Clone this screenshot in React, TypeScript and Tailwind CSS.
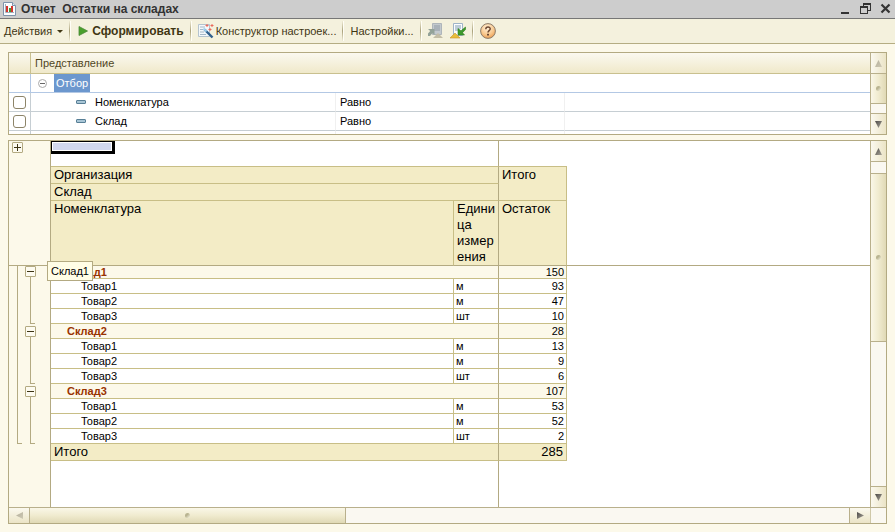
import type { ReactNode } from "react";

const SANS = "font-['Liberation_Sans',Arial,sans-serif]";

type Item = { name: string; unit: string; qty: number };
type Group = { name: string; total: number; items: Item[] };

const groups: Group[] = [
  {
    name: "Склад1",
    total: 150,
    items: [
      { name: "Товар1", unit: "м", qty: 93 },
      { name: "Товар2", unit: "м", qty: 47 },
      { name: "Товар3", unit: "шт", qty: 10 },
    ],
  },
  {
    name: "Склад2",
    total: 28,
    items: [
      { name: "Товар1", unit: "м", qty: 13 },
      { name: "Товар2", unit: "м", qty: 9 },
      { name: "Товар3", unit: "шт", qty: 6 },
    ],
  },
  {
    name: "Склад3",
    total: 107,
    items: [
      { name: "Товар1", unit: "м", qty: 53 },
      { name: "Товар2", unit: "м", qty: 52 },
      { name: "Товар3", unit: "шт", qty: 2 },
    ],
  },
];

function ReportIcon() {
  return (
    <svg width="13" height="14" viewBox="0 0 13 14" aria-hidden="true">
      <path d="M.5.500h9l3 3v10H.5z" fill="#fbfcfe" stroke="#7f93ab" />
      <path d="M9.500.5v3h3" fill="#dfe7f0" stroke="#7f93ab" />
      <path d="M2.500 2v8.500H11" fill="none" stroke="#a3b0bf" />
      <rect x="3" y="4" width="2" height="6" fill="#d3332c" />
      <rect x="6" y="6" width="2" height="4" fill="#3f9a3a" />
      <rect x="8" y="4" width="2" height="6" fill="#d3332c" />
    </svg>
  );
}

function WizardIcon() {
  return (
    <svg width="16" height="16" viewBox="0 0 16 16" aria-hidden="true">
      <path d="M.5 1.500h11v12H.5z" fill="#f4f8fb" stroke="#b4c3ce" />
      <path d="M2 4h5M2 6.500h3M2 9h4M2 11.500h6" stroke="#a5b8c7" />
      <path d="M6.500 6.500l8 8" stroke="#2f5f8c" strokeWidth="2.400" />
      <path d="M5.500 5.500l3 3" stroke="#9fd0ee" strokeWidth="2" />
      <path d="M9 1v3M7.500 2.500h3M14 1v3M12.500 2.500h3M12 5v3M10.500 6.500h3" stroke="#ea6a5c" />
    </svg>
  );
}

function ExportIcon({ load }: { load?: boolean }) {
  return (
    <svg width="16" height="16" viewBox="0 0 16 16" aria-hidden="true">
      {load ? (
        <>
          <path d="M3.500.500h9v12h-9z" fill="#fbfdff" stroke="#9fb4c8" />
          <path d="M5 3h6M5 5h6M5 7h4" stroke="#7f9bb3" />
          <path d="M0 15l5-5 5 5z" fill="#e8bd3b" stroke="#c9962a" strokeWidth=".6" />
          <path d="M8 5.500v6.500h6.500l-2-2.300L15.500 6.500V4L11 7.800z" fill="#3c9a2c" stroke="#2f7d22" strokeWidth=".6" />
        </>
      ) : (
        <>
          <path d="M4.500.500h9v11h-9z" fill="#c3c9ce" stroke="#aeb5ba" />
          <path d="M6 3h6M6 5h6M6 7h6" stroke="#8f9aa4" />
          <path d="M5 15l5-5 5 5z" fill="#c3bda6" />
          <path d="M0 6h6.500v6L4.500 10 2 13H0V10.500L2.200 8z" fill="#93a298" />
        </>
      )}
    </svg>
  );
}

function HelpIcon() {
  return (
    <svg width="16" height="16" viewBox="0 0 16 16" aria-hidden="true">
      <defs>
        <radialGradient id="help" cx=".45" cy=".3" r=".75">
          <stop offset="0" stopColor="#fff0d8" />
          <stop offset=".6" stopColor="#f8c78c" />
          <stop offset="1" stopColor="#e8964a" />
        </radialGradient>
      </defs>
      <circle cx="8" cy="8" r="7.400" fill="url(#help)" stroke="#8c7d6b" />
      <path d="M5.800 6.200c0-3 4.600-2.800 4.400-.2C10.100 7.600 8 7.700 8 9.500" fill="none" stroke="#6b4630" strokeWidth="1.500" />
      <rect x="7" y="10.800" width="2" height="1.700" fill="#6b4630" />
    </svg>
  );
}

function ToolButton({ label, bold, children }: { label?: string; bold?: boolean; children?: ReactNode }) {
  return (
    <button
      type="button"
      className={`flex items-center whitespace-nowrap ${bold ? "gap-1 text-xs font-bold" : "gap-0.5 text-[11px]"}`}
    >
      {children}
      {label}
    </button>
  );
}

function Separator() {
  return <span className="h-5 w-0.5 border-r border-[#fffef6] bg-linear-to-b from-[#f0ecd6] via-[#aaa27c] to-[#f0ecd6]" />;
}

const arrowPoints = {
  up: "3.500,0 7,7 0,7",
  down: "0,0 7,0 3.500,7",
  left: "0,3.500 7,0 7,7",
  right: "0,0 7,3.500 0,7",
};

function ScrollButton({ dir, faded, label }: { dir: keyof typeof arrowPoints; faded?: boolean; label: string }) {
  const vertical = dir === "up" || dir === "down";
  const fill = faded ? "arrow-faded" : "arrow";
  return (
    <button
      type="button"
      aria-label={label}
      className={`flex shrink-0 items-center justify-center from-[#fbf9ef] to-[#ebe4c6] ${
        vertical ? "h-5 w-full bg-linear-to-r" : "h-full w-5 bg-linear-to-b"
      }`}
    >
      <svg width="7" height="7" viewBox="0 0 7 7" aria-hidden="true">
        <defs>
          <linearGradient id={fill} x1="0" y1="0" x2="1" y2="1">
            <stop offset="0" stopColor={faded ? "#b3ae9c" : "#4c4a48"} />
            <stop offset="1" stopColor={faded ? "#cfcab4" : "#aaa69a"} />
          </linearGradient>
        </defs>
        <polygon points={arrowPoints[dir]} fill={`url(#${fill})`} />
      </svg>
    </button>
  );
}

function Grip() {
  return <span className="size-[5px] rounded-full bg-linear-to-br from-[#b9b491] from-40% to-[#fbf8e6]" />;
}

function VerticalScroll({ faded, lead, thumb }: { faded?: boolean; lead?: string; thumb: string }) {
  return (
    <div className="flex w-4 shrink-0 flex-col border-l border-[#b9b08c] bg-[#faf8f1]">
      <ScrollButton dir="up" faded={faded} label="Вверх" />
      {lead && <div className={`${lead} border-t border-[#b9b08c]`} />}
      <div className={`${thumb} flex items-center justify-center border-y border-[#b9b08c] bg-linear-to-r from-[#faf7e8] via-[#f0ebcf] to-[#e0d9b5]`}>
        <Grip />
      </div>
      <div className="flex-1 border-b border-[#b9b08c]" />
      <ScrollButton dir="down" label="Вниз" />
    </div>
  );
}

function FilterRow({ label }: { label: string }) {
  const id = `filter-${label}`;
  return (
    <tr className="h-[19px]">
      <td className="border-r border-b border-[#c6ced3]">
        <input
          id={id}
          type="checkbox"
          className="ml-1 block size-[13px] appearance-none rounded-[3px] border border-[#8d8468] bg-white"
        />
      </td>
      <td className="border-r border-b border-r-[#f0f0f0] border-b-[#c6ced3] pl-[45px]">
        <label htmlFor={id} className="flex items-center gap-[9px]">
          <span className="h-1 w-2.5 rounded-[1px] border border-[#587f96] bg-[#a9c6d6]" />
          {label}
        </label>
      </td>
      <td className="border-r border-b border-r-[#f0f0f0] border-b-[#c6ced3] pl-1">Равно</td>
      <td className="border-b border-[#c6ced3]" />
    </tr>
  );
}

function FilterPanel() {
  return (
    <section className="flex h-[83px] border border-[#b3aa82] bg-white">
      <div className="min-w-0 flex-1 overflow-hidden">
        <table className="w-full table-fixed border-separate border-spacing-0 text-[11px] leading-4 text-black">
          <colgroup>
            <col className="w-[22px]" />
            <col className="w-[305px]" />
            <col className="w-[229px]" />
            <col />
          </colgroup>
          <thead>
            <tr className="h-[21px] bg-linear-to-b from-[#fbf9f0] to-[#efe8c8] text-left text-[#51471f]">
              <th className="border-r border-b border-[#c9c08f]" />
              <th colSpan={3} className="border-b border-[#c9c08f] pl-1 font-normal">
                Представление
              </th>
            </tr>
          </thead>
          <tbody>
            <tr className="h-[19px]">
              <td className="border-r border-b border-[#b3c8e4]" />
              <td colSpan={3} className="border-b border-[#b3c8e4] pl-[7px]">
                <div className="flex items-center gap-[7px]">
                  <button
                    type="button"
                    aria-label="Свернуть"
                    className="flex size-[9px] items-center justify-center rounded-full border border-[#aaa]"
                  >
                    <span className="h-px w-[5px] bg-[#666]" />
                  </button>
                  <span className="h-[18px] bg-[#6c97ce] px-0.5 leading-[18px] text-white">Отбор</span>
                </div>
              </td>
            </tr>
            <FilterRow label="Номенклатура" />
            <FilterRow label="Склад" />
            <tr className="h-1">
              <td className="border-r border-[#c6ced3]" />
              <td className="border-r border-[#f0f0f0]" />
              <td className="border-r border-[#f0f0f0]" />
              <td />
            </tr>
          </tbody>
        </table>
      </div>
      <VerticalScroll faded thumb="h-[31px]" />
    </section>
  );
}

function TreeToggle({ open }: { open?: boolean }) {
  return (
    <button
      type="button"
      aria-label={open ? "Свернуть" : "Развернуть"}
      className="flex size-[11px] shrink-0 items-center justify-center rounded-[1px] border border-[#b3aa82] bg-[#fdfbf0]"
    >
      <svg width="7" height="7" viewBox="0 0 7 7" aria-hidden="true" shapeRendering="crispEdges">
        <path d={open ? "M0 3.500h7" : "M0 3.500h7M3.500 0v7"} stroke="#3d3414" />
      </svg>
    </button>
  );
}

function Gutter() {
  return (
    <div className="w-[42px] shrink-0 border-r border-[#b3aa82] bg-[#fcf9ea]">
      <div className="h-[125px] border-b border-[#b3aa82] pt-px pl-[3px]">
        <TreeToggle />
      </div>
      <div className="flex gap-[3px] pl-2">
        <div className="h-[178px] w-[5px] border-b border-l border-[#b3aa82]" />
        <div className="flex flex-col gap-0.5">
          {groups.map((g) => (
            <div key={g.name} className="flex h-[58px] flex-col">
              <TreeToggle open />
              <div className="ml-[5px] w-[5px] flex-1 border-b border-l border-[#b3aa82]" />
            </div>
          ))}
        </div>
      </div>
    </div>
  );
}

const head = "border-r border-b border-[#c8be86] bg-[#f3ecc6] pl-[3px] text-left align-top font-normal";
const cell = "border-r border-b border-[#c8be86]";
const frozenRight = "border-r-[#b3aa82]";
const frozenBottom = "border-b-[#b3aa82]";

function ReportTable() {
  return (
    <table className="h-full w-full table-fixed border-separate border-spacing-0 text-[11px] leading-3 text-black">
      <colgroup>
        <col className="w-[403px]" />
        <col className="w-[45px]" />
        <col className="w-[68px]" />
        <col />
      </colgroup>
      <thead className="text-[13px] leading-4">
        <tr className="h-[26px]">
          <td colSpan={2} className={`${cell} ${frozenRight} align-top`}>
            <div className="h-[13px] w-16 border-t border-r-3 border-b-3 border-l border-black bg-white p-px">
              <div className="h-full bg-[#d2d8ee]" />
            </div>
          </td>
          <td className="border-b border-[#c8be86]" />
          <td />
        </tr>
        <tr className="h-[17px]">
          <th colSpan={2} className={`${head} ${frozenRight}`}>Организация</th>
          <th rowSpan={2} className={head}>Итого</th>
          <td />
        </tr>
        <tr className="h-[17px]">
          <th colSpan={2} className={`${head} ${frozenRight}`}>Склад</th>
          <td />
        </tr>
        <tr className="h-[65px]">
          <th className={`${head} ${frozenBottom}`}>Номенклатура</th>
          <th className={`${head} ${frozenRight} ${frozenBottom} break-words`}>Единица измерения</th>
          <th className={`${head} ${frozenBottom}`}>Остаток</th>
          <td className="border-b border-[#b3aa82]" />
        </tr>
      </thead>
      <tbody>
        {groups.map((g, i) => [
          <tr key={g.name} className={i === 0 ? "h-[13px]" : "h-[15px]"}>
            <td colSpan={2} className={`${cell} ${frozenRight} bg-[#fcf9ea] pl-4 font-bold text-[#993300]`}>{g.name}</td>
            <td className={`${cell} bg-[#fcf9ea] pr-0.5 text-right`}>{g.total}</td>
            <td />
          </tr>,
          ...g.items.map((item) => (
            <tr key={g.name + item.name} className="h-[15px]">
              <td className={`${cell} pl-[30px]`}>{item.name}</td>
              <td className={`${cell} ${frozenRight} pl-0.5`}>{item.unit}</td>
              <td className={`${cell} pr-0.5 text-right`}>{item.qty}</td>
              <td />
            </tr>
          )),
        ])}
        <tr className="h-[17px] text-[13px] leading-4">
          <td colSpan={2} className={`${head} ${frozenRight}`}>Итого</td>
          <td className={`${cell} bg-[#f3ecc6] pr-[3px] text-right`}>285</td>
          <td />
        </tr>
        <tr>
          <td colSpan={2} className="border-r border-[#b3aa82]" />
          <td colSpan={2} />
        </tr>
      </tbody>
    </table>
  );
}

function ReportPanel() {
  return (
    <section className="relative flex flex-1 flex-col border border-[#b3aa82] bg-white">
      <div className="flex flex-1">
        <Gutter />
        <div className="min-w-0 flex-1">
          <ReportTable />
        </div>
        <VerticalScroll lead="h-3" thumb="h-[169px]" />
      </div>
      <div className="flex h-4 border-t border-[#b9b08c] bg-[#faf8f1]">
        <ScrollButton dir="left" faded label="Влево" />
        <div className="flex w-[317px] items-center justify-center border-x border-[#b9b08c] bg-linear-to-b from-[#faf7e8] via-[#f0ebcf] to-[#e0d9b5]">
          <Grip />
        </div>
        <div className="flex-1 border-r border-[#b9b08c]" />
        <ScrollButton dir="right" label="Вправо" />
        <div className="w-4 border-l border-[#cfc8a8]" />
      </div>
      <div
        role="tooltip"
        className="absolute top-[120px] left-[38px] h-5 border border-[#b3aa82] bg-[#fffde6] px-[3px] text-[11px] leading-[18px] text-black"
      >
        Склад1
      </div>
    </section>
  );
}

export default function App() {
  return (
    <div className={`${SANS} flex min-h-screen flex-col bg-[#fcf9ea] text-[#3f3613]`}>
      <header className="flex h-[19px] items-center border-b border-[#777] bg-[#cdcdcd] pr-1 pl-[3px] text-[#333]">
        <ReportIcon />
        <h1 className="ml-[5px] flex-1 text-xs leading-4 font-bold whitespace-pre">Отчет  Остатки на складах</h1>
        <div className="flex items-center gap-[9px]">
          <button type="button" aria-label="Свернуть">
            <svg width="11" height="12" viewBox="0 0 11 12" aria-hidden="true" shapeRendering="crispEdges">
              <path d="M1 10h8" stroke="#333" strokeWidth="2" />
            </svg>
          </button>
          <button type="button" aria-label="Восстановить">
            <svg width="11" height="12" viewBox="0 0 11 12" aria-hidden="true" shapeRendering="crispEdges">
              <path d="M3.500 3V1M10.500 1v6.500H8M.500 4v6.500h7V4" fill="none" stroke="#333" />
              <path d="M3 1h8M0 4h8" stroke="#333" strokeWidth="2" />
            </svg>
          </button>
          <button type="button" aria-label="Закрыть">
            <svg width="11" height="12" viewBox="0 0 11 12" aria-hidden="true">
              <path d="M1.500 1.500l8 8M9.500 1.500l-8 8" stroke="#333" strokeWidth="2.200" />
            </svg>
          </button>
        </div>
      </header>
      <nav className="flex h-[25px] items-center gap-1.5 border-b border-[#b5ad83] bg-[#f4f1dd] pl-1">
        <button type="button" className="flex items-center gap-[5px] text-[11px]">
          Действия
          <svg width="6" height="3" viewBox="0 0 6 3" aria-hidden="true">
            <path d="M0 0h6L3 3z" fill="#3f3613" />
          </svg>
        </button>
        <Separator />
        <ToolButton label="Сформировать" bold>
          <svg width="11" height="12" viewBox="0 0 11 12" aria-hidden="true">
            <path d="M2 1.500l8.500 4.500L2 10.500z" fill="#4aa02c" stroke="#4d8a3a" strokeWidth=".8" />
          </svg>
        </ToolButton>
        <Separator />
        <ToolButton label="Конструктор настроек...">
          <WizardIcon />
        </ToolButton>
        <Separator />
        <ToolButton label="Настройки..." />
        <Separator />
        <button type="button" disabled aria-label="Загрузить настройки">
          <ExportIcon />
        </button>
        <button type="button" aria-label="Сохранить настройки">
          <ExportIcon load />
        </button>
        <Separator />
        <button type="button" aria-label="Справка">
          <HelpIcon />
        </button>
      </nav>
      <main className="flex flex-1 flex-col gap-[5px] px-2 py-2">
        <FilterPanel />
        <ReportPanel />
      </main>
    </div>
  );
}
